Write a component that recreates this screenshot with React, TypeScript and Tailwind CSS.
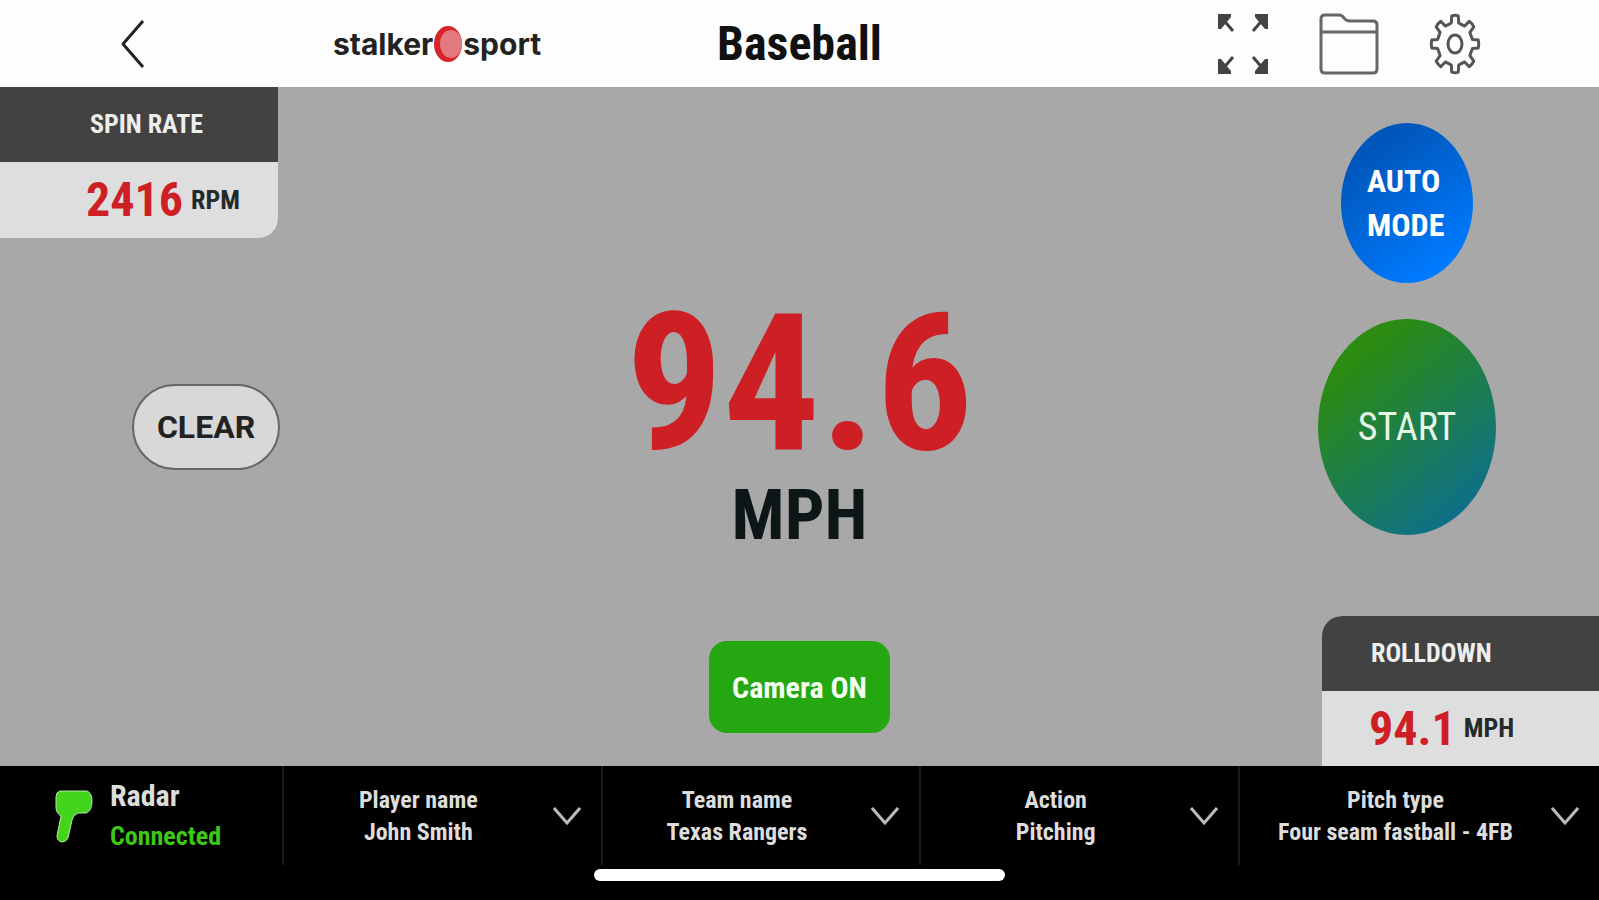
import type { ReactNode } from 'react';

const selectors = [
  { id: 'player', label: 'Player name', options: ['John Smith'] },
  { id: 'team', label: 'Team name', options: ['Texas Rangers'] },
  { id: 'action', label: 'Action', options: ['Pitching'] },
  { id: 'pitch', label: 'Pitch type', options: ['Four seam fastball - 4FB'] },
];

// Outline of an eight-toothed gear, slightly taller than wide
function gearPath() {
  const point = (r: number, deg: number) => {
    const a = (deg * Math.PI) / 180;
    return `${(26 + r * 24 * Math.sin(a)).toFixed(1)} ${(31 - r * 29 * Math.cos(a)).toFixed(1)}`;
  };
  let d = '';
  for (let i = 0; i < 8; i++) {
    const c = i * 45;
    d += `${i === 0 ? 'M' : 'L'}${point(0.74, c - 12)} L${point(0.98, c - 8)} Q${point(1.01, c)} ${point(0.98, c + 8)} L${point(0.74, c + 12)} Q${point(0.72, c + 22.5)} ${point(0.74, c + 33)} `;
  }
  return d + 'Z';
}

function BackIcon() {
  return (
    <svg width="26" height="50" viewBox="0 0 26 50" fill="none" stroke="#222" strokeWidth="3">
      <path d="M23 2 L3 25 L23 48" strokeLinejoin="round" />
    </svg>
  );
}

function ExpandIcon() {
  return (
    <svg width="52" height="62" viewBox="0 0 52 62" fill="#444" stroke="#444" strokeWidth="3">
      <path d="M4 4 L16 18 M48 4 L36 18 M4 58 L16 44 M48 58 L36 44" />
      <path
        d="M1 1 H14 V4 L4 16 H1 Z M51 1 H38 V4 L48 16 H51 Z M1 61 H14 V58 L4 46 H1 Z M51 61 H38 V58 L48 46 H51 Z"
        stroke="none"
      />
    </svg>
  );
}

function FolderIcon() {
  return (
    <svg width="60" height="62" viewBox="0 0 60 62" fill="none" stroke="#666" strokeWidth="3">
      <path d="M2 56 V6 Q2 2 6 2 H20 Q23 2 25 5 Q27 8 31 8 H54 Q58 8 58 12 V56 Q58 60 54 60 H6 Q2 60 2 56 Z" />
      <path d="M2 19 H58" />
    </svg>
  );
}

function GearIcon() {
  return (
    <svg width="52" height="62" viewBox="0 0 52 62" fill="none" stroke="#555" strokeWidth="3" strokeLinejoin="round">
      <path d={gearPath()} />
      <ellipse cx="26" cy="31" rx="7" ry="9" />
    </svg>
  );
}

function RadarGunIcon() {
  return (
    <svg width="40" height="54" viewBox="0 0 40 54">
      <path
        d="M6 2 H33 Q38 4 38 12 Q38 22 32 24 H24 Q19 26 18 31 L14 49 Q12 53 8 53 Q3 52 3 47 L7 27 Q2 24 2 18 V8 Q2 3 6 2 Z"
        fill="#42d51c"
        stroke="#b9e8ac"
        strokeWidth="1"
      />
    </svg>
  );
}

function IconButton({ label, children }: { label: string; children: ReactNode }) {
  return (
    <button type="button" aria-label={label} className="shrink-0">
      {children}
    </button>
  );
}

function Header() {
  return (
    <header className="grid h-[87px] grid-cols-[1fr_auto_1fr] items-center bg-[#fdfdfd]">
      <div className="flex items-center pl-[120px]">
        <IconButton label="Back">
          <BackIcon />
        </IconButton>
        <div className="ml-[187px] flex items-center font-['Inter'] text-[30px] leading-9 font-bold text-[#222]">
          <span>stalker</span>
          <svg width="30" height="38" viewBox="0 0 30 38">
            <ellipse cx="15" cy="19" rx="14" ry="18" fill="#d8252c" />
            <ellipse cx="18" cy="19" rx="11" ry="14" fill="#e37a7e" />
          </svg>
          <span>sport</span>
        </div>
      </div>
      <h1 className="text-[48px] leading-none font-bold text-[#111]">Baseball</h1>
      <div className="flex items-center justify-end gap-[50px] pr-[118px]">
        <IconButton label="Full screen">
          <ExpandIcon />
        </IconButton>
        <IconButton label="Files">
          <FolderIcon />
        </IconButton>
        <IconButton label="Settings">
          <GearIcon />
        </IconButton>
      </div>
    </header>
  );
}

export default function App() {
  return (
    <div className="flex min-h-screen flex-col bg-[#a8a8a8] font-['Roboto_Condensed','Roboto',sans-serif]">
      <Header />

      <main className="grid grow grid-cols-[1fr_auto_1fr]">
        {/* Left: spin rate and clear */}
        <div className="flex flex-col items-start">
          <section className="w-[278px] overflow-hidden rounded-br-[20px] bg-[#dedede]">
            <h2 className="flex h-[75px] items-center bg-[#424242] pl-[90px] text-[26px] font-bold text-[#eee]">SPIN RATE</h2>
            <p className="flex h-[76px] items-center gap-2 pl-[86px]">
              <span className="text-[48px] leading-none font-bold text-[#ce1f25]">2416</span>
              <span className="text-[26px] font-bold text-[#222a2a]">RPM</span>
            </p>
          </section>
          <button
            type="button"
            className="mt-[146px] ml-[132px] h-[86px] w-[148px] rounded-full border-2 border-[#666] bg-[#d8d8d8] font-['Roboto'] text-[32px] font-bold text-[#222]"
          >
            CLEAR
          </button>
        </div>

        {/* Centre: current speed */}
        <div className="flex flex-col items-center justify-between pt-[202px] pb-[33px]">
          <p className="flex flex-col items-center font-bold">
            <span className="text-[192px] leading-[190px] text-[#ce1f25]">94.6</span>
            <span className="text-[70px] leading-[72px] text-[#0d1617]">MPH</span>
          </p>
          <button type="button" className="h-[92px] w-[181px] rounded-[18px] bg-[#24a711] text-[30px] font-bold text-[#f2fff0]">
            Camera ON
          </button>
        </div>

        {/* Right: recording controls and rolldown */}
        <div className="flex flex-col items-end justify-between">
          <div className="mr-[103px] flex flex-col items-center gap-9 pt-9">
            <button
              type="button"
              className="h-[160px] w-[132px] rounded-[50%] bg-linear-[145deg] from-[#0057bb] from-20% to-[#007aff] to-85% pl-[26px] text-left text-[32px] leading-11 font-bold text-white"
            >
              AUTO
              <br />
              MODE
            </button>
            <button
              type="button"
              className="h-[216px] w-[178px] rounded-[50%] bg-linear-[140deg] from-[#2b8b12] from-20% to-[#0d6e90] to-90% text-[38px] text-[#e6f5e6]"
            >
              START
            </button>
          </div>
          <section className="w-[277px] overflow-hidden rounded-tl-[20px] bg-[#dedede]">
            <h2 className="flex h-[75px] items-center bg-[#424242] pl-[49px] text-[26px] font-bold text-[#eee]">ROLLDOWN</h2>
            <p className="flex h-[75px] items-center gap-2 pl-[47px]">
              <span className="text-[48px] leading-none font-bold text-[#ce1f25]">94.1</span>
              <span className="text-[26px] font-bold text-[#222a2a]">MPH</span>
            </p>
          </section>
        </div>
      </main>

      <footer className="bg-black text-[#ddd]">
        <div className="grid h-[99px] grid-cols-[282px_1fr_1fr_1fr_361px]">
          <div className="flex items-center gap-4 pl-[54px]">
            <RadarGunIcon />
            <p className="flex flex-col gap-1 font-bold">
              <span className="text-[30px] leading-9">Radar</span>
              <span className="text-[26px] leading-9 text-[#3cc817]">Connected</span>
            </p>
          </div>
          {selectors.map(({ id, label, options }) => (
            <div key={id} className="flex items-center border-l-2 border-[#151c1c] pr-5">
              <div className="flex min-w-0 grow flex-col items-center text-[24px] leading-8 font-bold">
                <label htmlFor={id}>{label}</label>
                <select id={id} className="w-full appearance-none bg-transparent text-center [text-align-last:center]">
                  {options.map((option) => (
                    <option key={option}>{option}</option>
                  ))}
                </select>
              </div>
              <svg width="28" height="20" viewBox="0 0 28 20" fill="none" stroke="#bbb" strokeWidth="3" className="shrink-0">
                <path d="M1 2 L14 17 L27 2" />
              </svg>
            </div>
          ))}
        </div>
        <div className="flex justify-center pt-1 pb-[19px]">
          <div className="h-3 w-[411px] rounded-full bg-white" />
        </div>
      </footer>
    </div>
  );
}
